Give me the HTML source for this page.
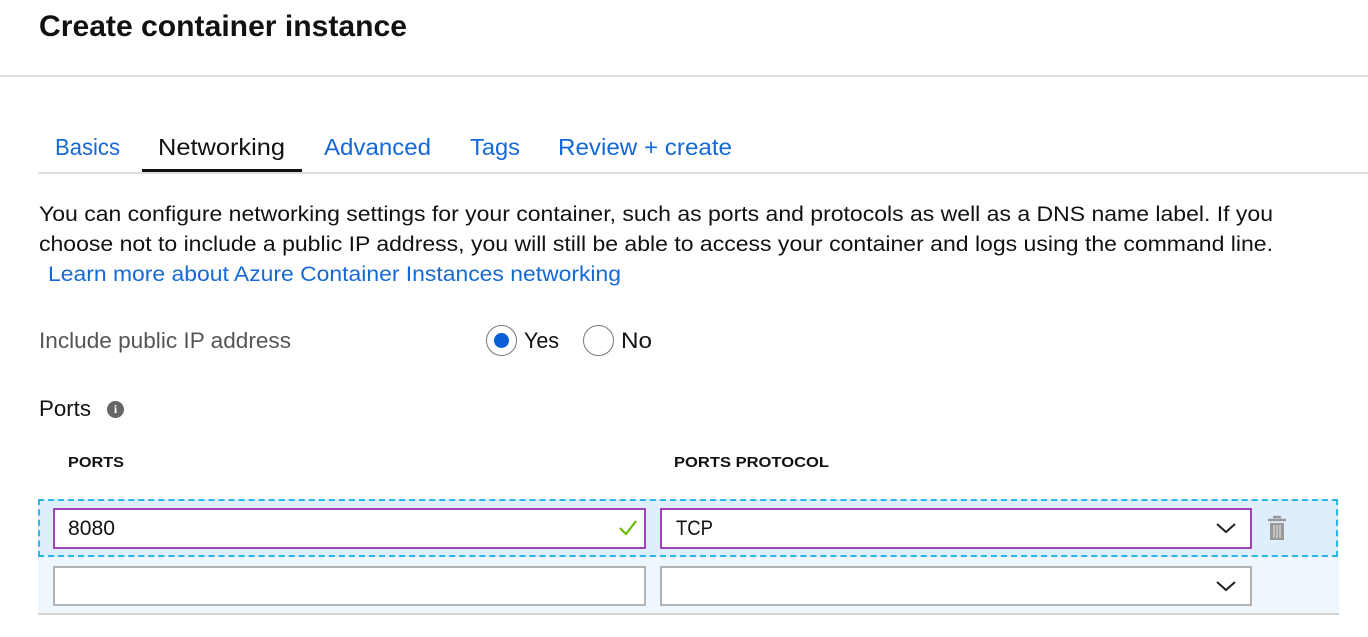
<!DOCTYPE html>
<html><head><meta charset="utf-8">
<style>
*{margin:0;padding:0;box-sizing:border-box}
body{width:1368px;height:637px;background:#fff;position:relative;overflow:hidden;font-family:"Liberation Sans",sans-serif;color:#111}
.t{position:absolute;white-space:nowrap;line-height:1;transform-origin:0 50%}
.fit{display:inline-block}
.blue{color:#1569d6}
.ln{position:absolute;height:2px;background:#dedede}
.box{position:absolute;background:#fff}
</style></head><body>
<div class="t fit" style="left:39px;top:12px;font-size:30px;font-weight:bold;width:368px">Create container instance</div>
<div class="ln" style="left:0;top:75px;width:1368px"></div>

<div class="t fit blue" style="left:55px;top:136px;font-size:23px;width:65px">Basics</div>
<div class="t fit" style="left:158px;top:136px;font-size:23px;width:127px">Networking</div>
<div class="t fit blue" style="left:324px;top:136px;font-size:23px;width:107px">Advanced</div>
<div class="t fit blue" style="left:470px;top:136px;font-size:23px;width:50px">Tags</div>
<div class="t fit blue" style="left:558px;top:136px;font-size:23px;width:174px">Review + create</div>
<div class="ln" style="left:38px;top:172px;width:1330px"></div>
<div style="position:absolute;left:142px;top:169px;width:160px;height:3px;background:#111"></div>

<div class="t fit" style="left:39px;top:204px;font-size:21px;width:1234px">You can configure networking settings for your container, such as ports and protocols as well as a DNS name label. If you</div>
<div class="t fit" style="left:39px;top:234px;font-size:21px;width:1234px">choose not to include a public IP address, you will still be able to access your container and logs using the command line.</div>
<div class="t fit blue" style="left:48px;top:264px;font-size:21px;width:573px">Learn more about Azure Container Instances networking</div>

<div class="t fit" style="left:39px;top:330px;font-size:22px;color:#555;width:252px">Include public IP address</div>
<div style="position:absolute;left:486px;top:325px;width:31px;height:31px;border:1.5px solid #777;border-radius:50%"></div>
<div style="position:absolute;left:494px;top:333px;width:15px;height:15px;background:#0a5fd8;border-radius:50%"></div>
<div class="t fit" style="left:524px;top:330px;font-size:22px;width:35px">Yes</div>
<div style="position:absolute;left:583px;top:325px;width:31px;height:31px;border:1.5px solid #777;border-radius:50%"></div>
<div class="t fit" style="left:621px;top:330px;font-size:22px;width:31px">No</div>

<div class="t fit" style="left:39px;top:398px;font-size:22px;width:52px">Ports</div>
<div style="position:absolute;left:107px;top:401px;width:17px;height:17px;background:#666;border-radius:50%;color:#fff;font:bold 12px/17px 'Liberation Serif',serif;text-align:center">i</div>

<div class="t fit" style="left:68px;top:455px;font-size:15px;font-weight:bold;width:56px">PORTS</div>
<div class="t fit" style="left:674px;top:455px;font-size:15px;font-weight:bold;width:155px">PORTS PROTOCOL</div>

<div style="position:absolute;left:38px;top:499px;width:1301px;height:115px;background:#eef6fe"></div>
<div style="position:absolute;left:38px;top:613px;width:1301px;height:2px;background:#d4d4d4"></div>
<div style="position:absolute;left:38px;top:499px;width:1300px;height:58px;background:#deeefd;border:2px dashed #2ab6e8"></div>

<div class="box" style="left:53px;top:508px;width:593px;height:41px;border:2px solid #9c44b8"></div>
<div class="t fit" style="left:68px;top:518px;font-size:21px;width:47px">8080</div>
<svg style="position:absolute;left:618px;top:518px" width="20" height="20" viewBox="0 0 20 20"><path d="M2 10 L8 16 L18 3" fill="none" stroke="#6bb700" stroke-width="2.2"/></svg>
<div class="box" style="left:660px;top:508px;width:592px;height:41px;border:2px solid #9c44b8"></div>
<div class="t fit" style="left:676px;top:518px;font-size:21px;width:37px">TCP</div>
<svg style="position:absolute;left:1215px;top:520px" width="22" height="16" viewBox="0 0 22 16"><path d="M2 4 L11 12 L20 4" fill="none" stroke="#222" stroke-width="2"/></svg>
<svg style="position:absolute;left:1266px;top:515px" width="22" height="28" viewBox="0 0 22 28"><path d="M7 2h8M2 5h18" stroke="#999" stroke-width="2.4" fill="none"/><rect x="4" y="8" width="14" height="17" fill="#999"/><path d="M8 10v13M11 10v13M14 10v13" stroke="#dcdcdc" stroke-width="1.3"/></svg>

<div class="box" style="left:53px;top:566px;width:593px;height:40px;border:2px solid #b3b3b3"></div>
<div class="box" style="left:660px;top:566px;width:592px;height:40px;border:2px solid #b3b3b3"></div>
<svg style="position:absolute;left:1215px;top:578px" width="22" height="16" viewBox="0 0 22 16"><path d="M2 4 L11 12 L20 4" fill="none" stroke="#222" stroke-width="2"/></svg>

<script>
document.querySelectorAll('.fit').forEach(function(e){
  var w=parseFloat(e.style.width);e.style.width='auto';
  var r=e.getBoundingClientRect().width;
  if(r>0){e.style.transform='scaleX('+(w/r)+')';}
});
</script>
</body></html>
